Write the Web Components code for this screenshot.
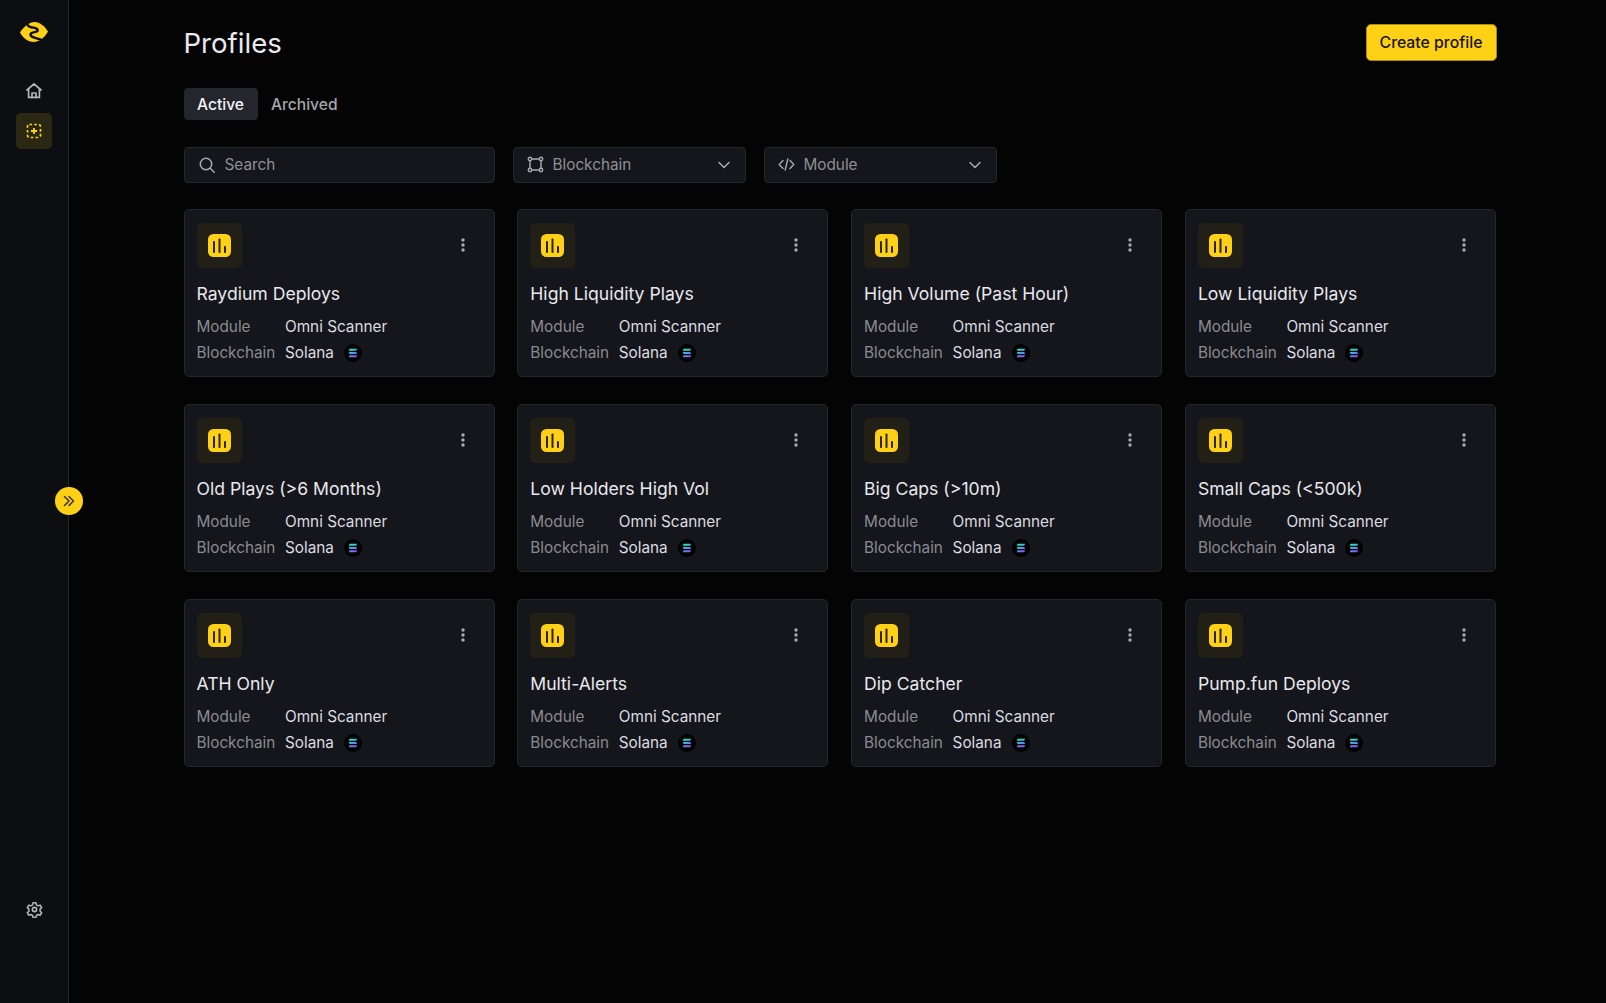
<!DOCTYPE html>
<html><head><meta charset="utf-8"><style>
html,body{margin:0;height:100%;background:#040405;}
body{font-family:Inter,"Liberation Sans",sans-serif;overflow:hidden}
</style></head><body><app-shell></app-shell>
<script>
const ICONS={
logo:`<svg width="30" height="22" viewBox="0 0 30 22"><path fill="#ffd116" d="M1 11.500 C5 5.500 9.500 1.500 15.500 1 C21 1 26 5.500 29 10.500 C25.500 16.500 20.500 20.800 14.500 21 C9 21 4 17 1 11.500 Z"/><path fill="none" stroke="#0d0e11" stroke-width="2.300" stroke-linecap="round" d="M8.500 3.800 C11 8 18.500 5.500 18.800 9.300 C18.800 12 12.500 10.300 11.500 13.200 C11 16.500 17.500 17 22 18.500"/></svg>`,
home:`<svg width="18" height="18" viewBox="0 0 18 18" fill="none" stroke="#b4b5ba" stroke-width="1.700" stroke-linejoin="round" stroke-linecap="round"><path d="M2 8 9 1.800 16 8M3.600 7v8.400h10.800V7"/><path d="M7 15.400V11h4v4.400"/></svg>`,
scan:`<svg width="16" height="16" viewBox="0 0 16 16" fill="none" stroke="#ffd116" stroke-width="1.700"><rect x="1.500" y="1.500" width="13" height="13" rx="2" stroke-dasharray="2.600 2.200"/><path d="M8 5v6M5 8h6" stroke-width="1.800"/></svg>`,
gear:`<svg width="17" height="17" viewBox="0 0 24 24" fill="none" stroke="#b4b5ba" stroke-width="2.200" stroke-linejoin="round"><circle cx="12" cy="12" r="3"/><path d="M10 2.500h4l.7 3 2.400 1.300 3-.9 2 3.400-2.200 2.200v2.900l2.200 2.200-2 3.400-3-.9-2.400 1.300-.7 3h-4l-.7-3-2.400-1.300-3 .9-2-3.400 2.200-2.200v-2.900L1.900 9.300l2-3.400 3 .9 2.400-1.300z"/></svg>`,
chevrons:`<svg width="14" height="14" viewBox="0 0 14 14" fill="none" stroke="#3a3520" stroke-width="1.600" stroke-linecap="round" stroke-linejoin="round"><path d="M2.500 2.500 7 7l-4.500 4.500M7 2.500 11.500 7 7 11.500"/></svg>`,
search:`<svg width="18" height="18" viewBox="0 0 18 18" fill="none" stroke="#a9aaaf" stroke-width="1.500" stroke-linecap="round"><circle cx="8" cy="8" r="5.700"/><path d="m12.200 12.200 4 4"/></svg>`,
chain:`<svg width="17" height="17" viewBox="0 0 17 17" fill="none" stroke="#a9aaaf" stroke-width="1.400"><path d="M3 3h11M3 14h11M3 3v11M14 3v11"/><g fill="#15161b"><circle cx="3" cy="3" r="1.700"/><circle cx="14" cy="3" r="1.700"/><circle cx="3" cy="14" r="1.700"/><circle cx="14" cy="14" r="1.700"/></g></svg>`,
code:`<svg width="17" height="17" viewBox="0 0 17 17" fill="none" stroke="#a9aaaf" stroke-width="1.400" stroke-linecap="round" stroke-linejoin="round"><path d="M5 4.500 1.200 8.500 5 12.500M12 4.500l3.800 4-3.800 4M9.800 3 7.200 14"/></svg>`,
chev:`<svg width="14" height="14" viewBox="0 0 14 14" fill="none" stroke="#a9aaaf" stroke-width="1.500" stroke-linecap="round" stroke-linejoin="round"><path d="M2 4.500 7 9.500l5-5"/></svg>`,
bars:`<svg width="23" height="23" viewBox="0 0 23 23"><rect width="23" height="23" rx="5.500" fill="#ffd116"/><g fill="#2b2510"><rect x="5" y="7" width="2" height="12" rx=".8"/><rect x="10.500" y="4.500" width="2" height="14.500" rx=".8"/><rect x="16" y="12" width="2" height="7" rx=".8"/></g></svg>`,
dots:`<svg width="4" height="14" viewBox="0 0 4 14" fill="#a9aaaf"><circle cx="2" cy="2" r="1.700"/><circle cx="2" cy="7" r="1.700"/><circle cx="2" cy="12" r="1.700"/></svg>`,
sol:`<svg width="18" height="18" viewBox="0 0 18 18"><defs><linearGradient id="g" gradientUnits="userSpaceOnUse" x1="6" y1="4.500" x2="11" y2="13.500"><stop offset="0" stop-color="#19fbb0"/><stop offset=".5" stop-color="#3ea8e8"/><stop offset="1" stop-color="#a045ff"/></linearGradient></defs><circle cx="9" cy="9" r="9" fill="#020203"/><g fill="url(#g)"><path d="M5.700 4.800h7.500l-1 1.900H4.700z" /><path d="M4.700 8h7.500l1 1.900H5.700z"/><path d="M5.700 11.300h7.500l-1 1.900H4.700z"/></g></svg>`
};
function def(name,html,init){customElements.define(name,class extends HTMLElement{constructor(){super();this.attachShadow({mode:'open'}).innerHTML=html;}connectedCallback(){init&&init.call(this)}})}

def('side-bar',`<style>
:host{display:flex;flex-direction:column;align-items:center;width:68px;flex:none;background:#0d0e11;border-right:1px solid #26262e;padding-top:20px;padding-bottom:76px;box-sizing:content-box;position:relative}
.logo{height:24px;margin-bottom:29px;display:flex;align-items:center}
.i{width:36px;height:36px;border-radius:5px;display:flex;align-items:center;justify-content:center;margin-bottom:4px}
.a{background:#2a2713}
.sp{flex:1}
.tog{position:absolute;left:55px;top:487px;width:28px;height:28px;border-radius:50%;background:#ffd116;display:flex;align-items:center;justify-content:center}
</style><div class="logo">${ICONS.logo}</div><div class="i">${ICONS.home}</div><div class="i a">${ICONS.scan}</div><div class="sp"></div><div class="i" style="margin:0">${ICONS.gear}</div><div class="tog">${ICONS.chevrons}</div>`);

def('tab-bar',`<style>:host{display:flex;align-items:center;font-size:15.600px;font-weight:500}
.t{height:32px;display:flex;align-items:center;padding:0 13.500px;border-radius:4px;color:#a5a6aa}
.on{background:#24252d;color:#f2f2f4}</style><div class="t on">Active</div><div class="t">Archived</div>`);

def('filter-box',`<style>:host{display:flex;align-items:center;box-sizing:border-box;height:36px;background:#15161b;border:1px solid #25262d;border-radius:4px;padding:0 14px 0 13px;color:#8e8f94;font-size:15.300px;gap:9px}
span{flex:1}</style><slot name="i"></slot><span><slot></slot></span><slot name="c"></slot>`);

def('profile-card',`<style>
:host{display:flex;flex-direction:column;box-sizing:border-box;height:168px;background:#15161b;border:1px solid #25262d;border-radius:5px;padding:13px 12px 0 12px}
.top{display:flex;justify-content:space-between;align-items:center;height:45px}
.ic{width:45px;height:45px;border-radius:5px;background:#221f17;display:flex;align-items:center;justify-content:center}
.d{width:22px;display:flex;justify-content:center;margin-right:8px;padding-bottom:1px}
h3{margin:13px 0 0;font-size:17.600px;line-height:26px;font-weight:400;color:#e8e8ee}
.r{display:grid;grid-template-columns:88.500px 1fr;font-size:15.300px;line-height:26.200px;color:#8a8b90;font-weight:400}
.top+h3+.r{margin-top:7px}
.v{color:#dcdce1;display:flex;align-items:center;gap:10px}
</style><div class="top"><div class="ic">${ICONS.bars}</div><div class="d">${ICONS.dots}</div></div><h3 id="t"></h3>
<div class="r"><span>Module</span><span class="v">Omni Scanner</span></div><div class="r"><span>Blockchain</span><span class="v">Solana ${ICONS.sol}</span></div>`,function(){this.shadowRoot.getElementById('t').textContent=this.getAttribute('name')});

const names=['Raydium Deploys','High Liquidity Plays','High Volume (Past Hour)','Low Liquidity Plays','Old Plays (>6 Months)','Low Holders High Vol','Big Caps (>10m)','Small Caps (<500k)','ATH Only','Multi-Alerts','Dip Catcher','Pump.fun Deploys'];
def('app-shell',`<style>
:host{display:flex;height:1003px;width:1606px;color:#eee}
main{flex:1;box-sizing:border-box;padding:24px 110px 0 114.500px;min-width:0}
.hd{display:flex;justify-content:space-between;align-items:center;height:37px}
h1{margin:0;font-size:27.600px;font-weight:400;color:#eaeaec}
.btn{width:131px;height:37px;margin-right:-.5px;box-sizing:border-box;background:#ffd116;border:1px solid #a98a10;border-radius:5px;color:#17150a;font-size:15.800px;font-weight:500;display:flex;align-items:center;justify-content:center}
tab-bar{margin-top:27px}
.f{display:flex;gap:18px;margin-top:26.500px}
.grid{display:grid;grid-template-columns:repeat(4,1fr);column-gap:22.700px;row-gap:27px;margin-top:26.500px}
</style><side-bar></side-bar><main><div class="hd"><h1>Profiles</h1><div class="btn">Create profile</div></div><tab-bar></tab-bar>
<div class="f"><filter-box style="width:311px"><span slot="i" style="display:flex">${ICONS.search}</span>Search</filter-box>
<filter-box style="width:233px"><span slot="i" style="display:flex">${ICONS.chain}</span>Blockchain<span slot="c" style="display:flex">${ICONS.chev}</span></filter-box>
<filter-box style="width:233px"><span slot="i" style="display:flex">${ICONS.code}</span>Module<span slot="c" style="display:flex">${ICONS.chev}</span></filter-box></div>
<div class="grid" id="g"></div></main>`,function(){const g=this.shadowRoot.getElementById('g');names.forEach(n=>{const c=document.createElement('profile-card');c.setAttribute('name',n);g.appendChild(c)})});
</script></body></html>
